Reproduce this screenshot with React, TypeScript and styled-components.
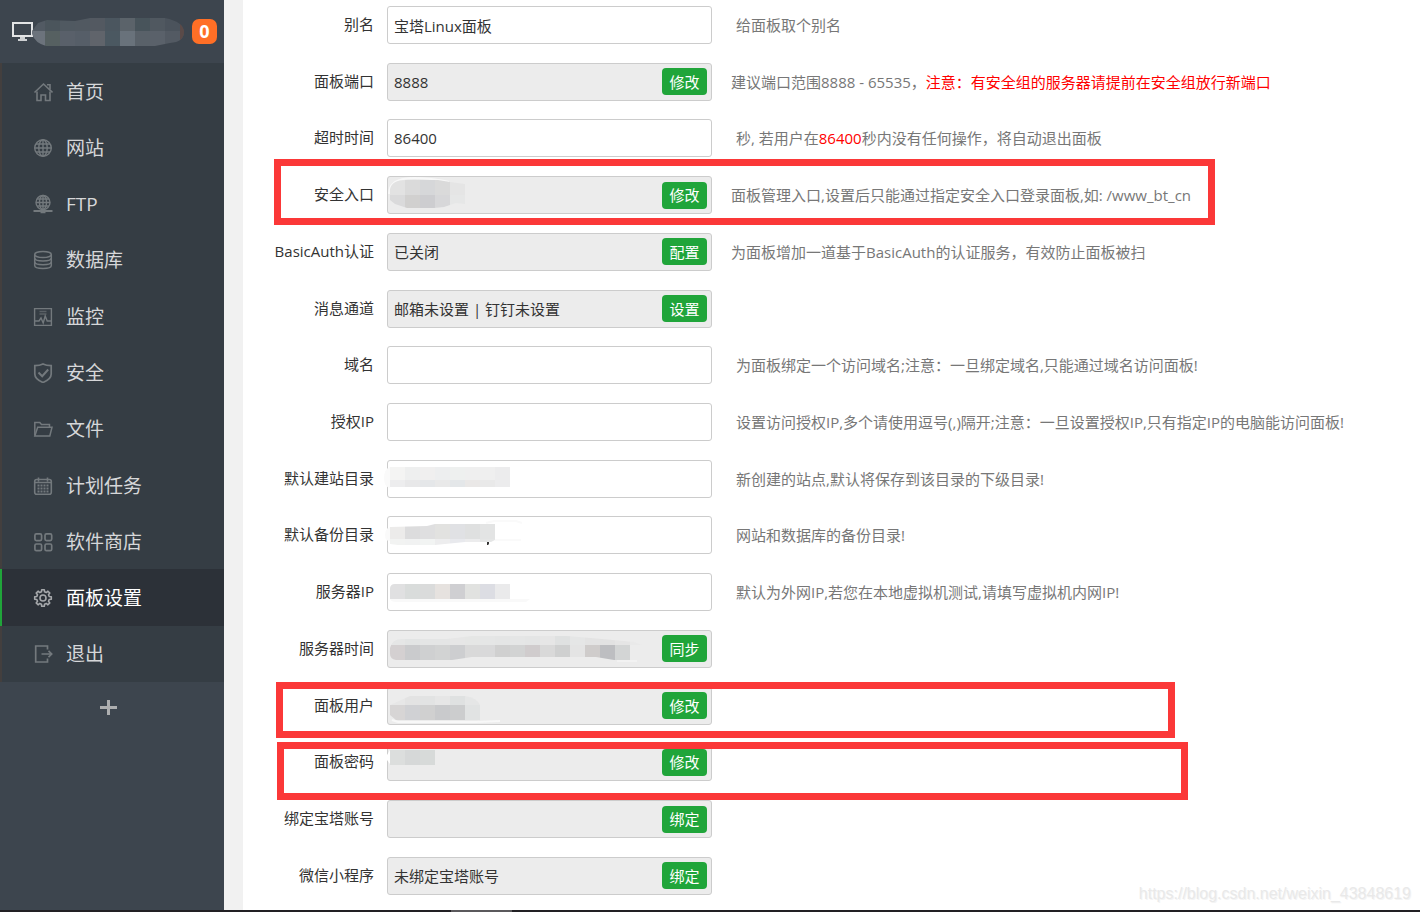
import React from "react";
import styled, { createGlobalStyle } from "styled-components";

const GlobalStyle = createGlobalStyle`
  * { box-sizing: border-box; }
  body {
    margin: 0;
    background: #fff;
    color: #333;
    font-family: "Open Sans", "Noto Sans CJK SC", sans-serif;
    font-size: 15px;
    line-height: 20px;
  }
  button, input { font: inherit; color: inherit; }
`;

const Page = styled.div`
  display: flex;
  flex-direction: column;
  min-height: 100vh;
`;

const Body = styled.div`
  display: flex;
  flex: 1;
`;

const Sidebar = styled.aside`
  flex: none;
  width: 224px;
  background: #3d454e;
`;

const HostBar = styled.header`
  display: flex;
  align-items: center;
  height: 63px;
  padding: 0 7px 0 11px;
`;

const HostName = styled.svg`
  flex: none;
  width: 152px;
  height: 28px;
  margin-left: -1px;
`;

const Badge = styled.span`
  margin-left: auto;
  width: 25px;
  height: 25px;
  border-radius: 7px;
  background: #ff6f26;
  color: #fff;
  font-size: 18px;
  font-weight: 700;
  line-height: 24px;
  text-align: center;
`;

const Menu = styled.nav`
  display: grid;
  grid-auto-rows: 1fr;
  min-height: 619px;
  background: #353d44;
`;

const MenuLink = styled.a<{ $active?: boolean }>`
  display: flex;
  align-items: center;
  gap: 13px;
  padding: 1px 0 0 31px;
  border-left: 2px solid ${(p) => (p.$active ? "#20a53a" : "#433f3e")};
  background: ${(p) => (p.$active ? "#2c3138" : "transparent")};
  color: ${(p) => (p.$active ? "#fff" : "#d6d7d9")};
  font-size: 19px;
  line-height: 24px;
  text-decoration: none;
  svg { color: ${(p) => (p.$active ? "#a6a8ab" : "#73797d")}; }
`;

const Glyph = styled.svg`
  flex: none;
  width: 20px;
  height: 20px;
  fill: none;
  stroke: currentColor;
`;

const AddButton = styled.button`
  display: flex;
  justify-content: center;
  align-items: center;
  width: 100%;
  height: 50px;
  padding: 0 7px 0 0;
  border: 0;
  background: none;
  color: #adaeaf;
`;

const Gutter = styled.div`
  flex: none;
  width: 19px;
  background: #f1f1f1;
`;

const Form = styled.form`
  flex: 1;
  min-width: 0;
  display: flex;
  flex-direction: column;
  justify-content: space-between;
  gap: 18px;
  padding: 6px 0 15px;
`;

const Row = styled.div`
  position: relative;
  display: flex;
  align-items: center;
`;

const Label = styled.label`
  flex: none;
  width: 131px;
  margin-right: 13px;
  padding-bottom: 2px;
  text-align: right;
`;

const Field = styled.div<{ $locked: boolean }>`
  position: relative;
  flex: none;
  display: flex;
  align-items: center;
  width: 325px;
  height: 38px;
  padding-right: 4px;
  border: 1px solid #ccc;
  border-radius: 3px;
  background: ${(p) => (p.$locked ? "#ececec" : "#fff")};
`;

const TextInput = styled.input`
  flex: 1;
  min-width: 0;
  height: 36px;
  padding: 0 6px;
  border: 0;
  outline: 0;
  background: none;
`;

const ActionButton = styled.button`
  flex: none;
  width: 45px;
  height: 27px;
  padding: 0;
  border: 0;
  border-radius: 4px;
  background: #20a53a;
  color: #fff;
`;

const Hint = styled.span<{ $locked: boolean }>`
  margin-left: ${(p) => (p.$locked ? 19 : 24)}px;
  color: #777;
`;

const Warn = styled.span`
  color: #f00;
`;

const Mosaic = styled.svg`
  position: absolute;
  left: -6px;
  top: -1px;
  width: 270px;
  height: 38px;
  pointer-events: none;
`;

const Highlight = styled.div<{ $box: [number, number, number, number] }>`
  position: absolute;
  left: ${(p) => p.$box[0]}px;
  top: ${(p) => p.$box[1]}px;
  width: ${(p) => p.$box[2]}px;
  height: ${(p) => p.$box[3]}px;
  border: 7px solid #fb3838;
  pointer-events: none;
`;

const Footer = styled.footer`
  display: flex;
  height: 2px;
  padding-left: 451px;
  background: #222024;
`;

const FooterThumb = styled.span`
  width: 61px;
  background: #5b595c;
`;

const Watermark = styled.span`
  position: absolute;
  right: 9px;
  bottom: 6px;
  color: #e9e9e9;
  font-family: "Liberation Sans", sans-serif;
  font-size: 16px;
  text-shadow: 1px 1px 0 #f4f4f4;
`;

const Main = styled.main`
  position: relative;
  flex: 1;
  min-width: 0;
  display: flex;
`;

/* A strip of equal cells, 15px wide, for masked values. */
const Cells = ({ x, y, h, colors }: { x: number; y: number; h: number; colors: string[] }) => (
  <>
    {colors.map((c, i) => (
      <rect key={i} x={x + i * 15} y={y} width={15} height={h} fill={c} />
    ))}
  </>
);

/* Outline of an eight-toothed gear centred at 10,10. */
const gearPath = (() => {
  const points: string[] = [];
  for (let tooth = 0; tooth < 8; tooth++) {
    const corners: [number, number][] = [[-14, 6.4], [-9, 8.4], [9, 8.4], [14, 6.4]];
    for (const [offset, r] of corners) {
      const a = ((tooth * 45 + offset) * Math.PI) / 180;
      points.push(`${(10 + r * Math.cos(a)).toFixed(2)} ${(10 + r * Math.sin(a)).toFixed(2)}`);
    }
  }
  return "M" + points.join("L") + "z";
})();

const icons: Record<string, React.ReactNode> = {
  home: (
    <g strokeWidth="1.6">
      <path d="M1.5 10.5 10.5 2l9 8.5" />
      <path d="M14 2.8h3v4.7" />
      <path d="M4 9.5v9h4V13h4.5v5.500H17v-9" />
    </g>
  ),
  globe: (
    <g strokeWidth="1.4">
      <circle cx="10" cy="10" r="8.3" />
      <ellipse cx="10" cy="10" rx="4.200" ry="8.3" />
      <path d="M10 1.700v16.600M1.700 10h16.600M3 6h14M3 14h14" />
    </g>
  ),
  ftp: (
    <g strokeWidth="1.400">
      <circle cx="10" cy="8.500" r="7" />
      <ellipse cx="10" cy="8.500" rx="3.500" ry="7" />
      <path d="M10 1.500v14M3 8.500h14M4.200 5h11.600M4.200 12h11.600" />
      <path d="M.5 17h19" strokeWidth="2" />
      <path d="M7.500 17.500h5" strokeWidth="3.500" />
    </g>
  ),
  database: (
    <g strokeWidth="1.500">
      <ellipse cx="10" cy="4.500" rx="8.3" ry="3" />
      <path d="M1.700 4.500v11c0 4 16.600 4 16.600 0v-11" />
      <path d="M1.700 8c0 4 16.600 4 16.600 0M1.700 11.700c0 4 16.600 4 16.600 0" />
    </g>
  ),
  monitor: (
    <g strokeWidth="1.400">
      <path d="M1.600 1.600h16.800v16.800H1.600z" />
      <path d="M2 14h4l2-3 2.200 5 2-7 2 5H18" />
      <path d="M6.500 4.500h7M6.500 7h7" opacity=".6" />
    </g>
  ),
  shield: (
    <g strokeWidth="1.700">
      <path d="M10 .9c2.500 1.300 5.500 1.700 8.200 1.700V11c0 4-4.500 7-8.200 8.500C6.300 18 1.800 15 1.800 11V2.600C4.500 2.600 7.500 2.200 10 .9z" />
      <path d="m5.500 9.500 3.700 3.700 6-6.700" strokeWidth="2" />
    </g>
  ),
  folder: (
    <g strokeWidth="1.500">
      <path d="M1.800 16.500v-13h5l1.700 2h8v2.700" />
      <path d="M1.800 17 4.700 8.200H19L16.800 17z" />
    </g>
  ),
  calendar: (
    <g strokeWidth="1.600">
      <rect x="1.700" y="3.500" width="16.600" height="14.800" rx="2" />
      <path d="M1.700 6.500h16.600M5.500 1.500v4M14.500 1.500v4" />
      <path d="M4.500 9.500h11M4.500 12.500h11M4.500 15.500h11" strokeWidth="1.800" strokeDasharray="2 1" />
    </g>
  ),
  apps: (
    <g strokeWidth="1.700">
      <rect x="1.900" y="1.900" width="6.700" height="6.700" rx="1.500" />
      <rect x="12" y="1.900" width="6.700" height="6.700" rx="1.500" />
      <rect x="1.900" y="12" width="6.700" height="6.700" rx="1.500" />
      <rect x="12" y="12" width="6.700" height="6.700" rx="1.500" />
    </g>
  ),
  gear: (
    <g strokeWidth="1.600" strokeLinejoin="round">
      <path d={gearPath} />
      <circle cx="10" cy="10" r="3" />
    </g>
  ),
  exit: (
    <g strokeWidth="1.700">
      <path d="M14.500 5.500V2H2.700v16h11.800v-3.500" />
      <path d="M8.500 10h10M15.500 6.800l3.200 3.200-3.200 3.200" />
    </g>
  ),
};

const menu: [string, string][] = [
  ["home", "首页"],
  ["globe", "网站"],
  ["ftp", "FTP"],
  ["database", "数据库"],
  ["monitor", "监控"],
  ["shield", "安全"],
  ["folder", "文件"],
  ["calendar", "计划任务"],
  ["apps", "软件商店"],
  ["gear", "面板设置"],
  ["exit", "退出"],
];

type Setting = {
  label: string;
  value?: string;
  action?: string;
  hint?: React.ReactNode;
  mask?: React.ReactNode;
  box?: [number, number, number, number];
};

const settings: Setting[] = [
  { label: "别名", value: "宝塔Linux面板", hint: "给面板取个别名" },
  {
    label: "面板端口",
    value: "8888",
    action: "修改",
    hint: (
      <>
        建议端口范围8888 - 65535，<Warn>注意：有安全组的服务器请提前在安全组放行新端口</Warn>
      </>
    ),
  },
  {
    label: "超时时间",
    value: "86400",
    hint: (
      <>
        秒, 若用户在<Warn>86400</Warn>秒内没有任何操作，将自动退出面板
      </>
    ),
  },
  {
    label: "安全入口",
    action: "修改",
    hint: "面板管理入口,设置后只能通过指定安全入口登录面板,如: /www_bt_cn",
    box: [31, -17, 941, 66],
    mask: (
      <>
        <path d="M7 18C7 7 16 2 32 2s26 2 35 4" stroke="#f8f8f8" strokeWidth="2" fill="none" />
        <clipPath id="entry">
          <path d="M8 13Q10 4 24 4H56L68 6l15 2v20l-9-1-12 4-10 1H25L13 28 8 24z" />
        </clipPath>
        <g clipPath="url(#entry)">
          <Cells x={8} y={4} h={15} colors={["#e2e2e2", "#dadada", "#d6d7d9", "#dadada", "#e5e5e5"]} />
          <Cells x={8} y={19} h={14} colors={["#dadadb", "#d1d0cf", "#cdcdd0", "#d7d7d9", "#e6e7e7"]} />
        </g>
      </>
    ),
  },
  {
    label: "BasicAuth认证",
    value: "已关闭",
    action: "配置",
    hint: "为面板增加一道基于BasicAuth的认证服务，有效防止面板被扫",
  },
  { label: "消息通道", value: "邮箱未设置 | 钉钉未设置", action: "设置" },
  { label: "域名", hint: "为面板绑定一个访问域名;注意：一旦绑定域名,只能通过域名访问面板!" },
  {
    label: "授权IP",
    hint: "设置访问授权IP,多个请使用逗号(,)隔开;注意：一旦设置授权IP,只有指定IP的电脑能访问面板!",
  },
  {
    label: "默认建站目录",
    hint: "新创建的站点,默认将保存到该目录的下级目录!",
    mask: (
      <>
        <path d="M8 7Q2 9 2 18t6 10z" fill="#fafafa" />
        <Cells x={8} y={7} h={13} colors={["#f4f4f3", "#eeefef", "#f0efef", "#edeeef", "#eef0ef", "#efefef", "#efefef", "#ececed"]} />
        <Cells x={8} y={20} h={7} colors={["#ededee", "#e8e8e9", "#e5e7e9", "#e9e9e9", "#e4e7e9", "#eae8e7", "#e9e9e9", "#ececed"]} />
      </>
    ),
  },
  {
    label: "默认备份目录",
    hint: "网站和数据库的备份目录!",
    mask: (
      <>
        <path d="M8 11Q3 13 3 19t5 6z" fill="#fafafa" />
        <path d="M104 7l8-2h22l6 2M113 24h26" stroke="#fafafa" strokeWidth="2" fill="none" />
        <clipPath id="backup">
          <path d="M8 11 45 10l8-2h60v16l-4 2H83l-30 3H16l-8-1z" />
        </clipPath>
        <g clipPath="url(#backup)">
          <Cells x={8} y={8} h={16} colors={["#ecebea", "#dcdcdd", "#dfdfe0", "#e2e2e0", "#e0e1e4", "#dfe0e0", "#e3e4e4"]} />
          <Cells x={8} y={23} h={6} colors={["#f2f3f2", "#f1f2f2", "#f2f4f3", "#ededee", "#e8e9ed", "#ececed", "#e5e6e6"]} />
        </g>
        <path d="M105 26h2v2l-1 1h-1z" fill="#333" />
      </>
    ),
  },
  {
    label: "服务器IP",
    hint: "默认为外网IP,若您在本地虚拟机测试,请填写虚拟机内网IP!",
    mask: (
      <>
        <path d="M8 26h140l-4 3H14q-5 0-6-3zM115 10h28" fill="#f9f9f9" />
        <clipPath id="ip">
          <path d="M8 16q0-5 5-5h115v15H8z" />
        </clipPath>
        <g clipPath="url(#ip)">
          <Cells x={8} y={11} h={15} colors={["#e0e0e1", "#d9dcdb", "#dadbdb", "#e6e2df", "#cfcfd2", "#e1e2e0", "#dcdde3", "#eaeaeb"]} />
        </g>
      </>
    ),
  },
  {
    label: "服务器时间",
    action: "同步",
    mask: (
      <>
        <clipPath id="time">
          <path d="M8 18Q10 9 20 9h45l25-3h95l35 3 32 3 8 3-12 1v14h-16l-18-3H90l-20 3H14q-6-1-6-6z" />
        </clipPath>
        <g clipPath="url(#time)">
          <Cells x={8} y={6} h={9} colors={["#e5e6e6", "#e2e4e4", "#e4e5e5", "#e4e5e5", "#e6e6e6", "#e5e6e5", "#e5e6e6", "#e4e5e5", "#e5e6e6", "#e4e5e5", "#e6e6e6", "#dfe1e1", "#e5e6e6", "#e3e3e3", "#e2e2e2", "#e5e5e5", "#e9e9e9"]} />
          <Cells x={8} y={15} h={16} colors={["#d4d0d1", "#cacbcd", "#cfd0d1", "#d2d3d3", "#cdced0", "#d9d9d9", "#d9d9da", "#d0d0d0", "#d2d3d3", "#d0cccd", "#d9d9d9", "#cfd0d0", "#e4e4e4", "#cfcccb", "#bdbec1", "#d3d5d5"]} />
        </g>
        <path d="M235 31h20" stroke="#f8f8f8" />
      </>
    ),
  },
  {
    label: "面板用户",
    action: "修改",
    box: [33, -5, 899, 56],
    mask: (
      <>
        <clipPath id="user">
          <path d="M8 18 28 9h55q12 2 15 9v15H14l-6-5z" />
        </clipPath>
        <g clipPath="url(#user)">
          <Cells x={8} y={9} h={9} colors={["#e7e7e7", "#e3e3e3", "#e2e3e3", "#e6e6e6", "#dfe1e1", "#e5e6e6"]} />
          <Cells x={8} y={18} h={15} colors={["#d7d5d5", "#d0d1d4", "#d0d0d0", "#c9cacc", "#cccdce", "#e1e3e3"]} />
        </g>
        <path d="M10 33l6 2h78l24-1" stroke="#f8f8f8" strokeWidth="2" fill="none" />
      </>
    ),
  },
  {
    label: "面板密码",
    action: "修改",
    box: [34, -1, 911, 58],
    mask: (
      <>
        <path d="M8 7 5 12v5l3 4z" fill="#fff" />
        <Cells x={8} y={7} h={15} colors={["#dcdedd", "#d6d8d8", "#d7dad9"]} />
      </>
    ),
  },
  { label: "绑定宝塔账号", action: "绑定" },
  { label: "微信小程序", value: "未绑定宝塔账号", action: "绑定" },
];

export default function App() {
  return (
    <Page>
      <GlobalStyle />
      <Body>
        <Sidebar>
          <HostBar>
            <svg width="22" height="22" viewBox="0 0 22 22" fill="none">
              <path d="M2 2h19v13H2z" stroke="#e3e4e5" strokeWidth="2" />
              <path d="M9 16h5v2h2v2H7v-2h2z" fill="#cfd1d3" />
            </svg>
            <HostName viewBox="0 0 152 28">
              <clipPath id="host">
                <path d="M0 13 6 5l9-3 28 1 15-3h75q19 4 19 14t-14 11l-15 3H14Q3 25 0 16z" />
              </clipPath>
              <g clipPath="url(#host)">
                <Cells x={-2} y={0} h={13} colors={["#525a63", "#4b555c", "#505961", "#515961", "#535961", "#4b565f", "#5b636a", "#48545b", "#505860", "#4b535c", "#454e57"]} />
                <Cells x={-2} y={13} h={15} colors={["#6c737c", "#566061", "#59606a", "#565e68", "#60646b", "#4b5861", "#69727b", "#596169", "#5a616a", "#535a63", "#4d535b"]} />
                <rect x="148" y="5" width="4" height="17" fill="#5a4a48" />
              </g>
            </HostName>
            <Badge>0</Badge>
          </HostBar>
          <Menu>
            {menu.map(([icon, text]) => (
              <MenuLink key={icon} href={"#" + icon} $active={icon === "gear"}>
                <Glyph viewBox="0 0 20 20">{icons[icon]}</Glyph>
                {text}
              </MenuLink>
            ))}
          </Menu>
          <AddButton type="button" aria-label="添加">
            <svg width="17" height="17" viewBox="0 0 17 17">
              <path d="M8.500 1v15M0 8.500h17" stroke="currentColor" strokeWidth="3" />
            </svg>
          </AddButton>
        </Sidebar>
        <Gutter />
        <Main>
          <Form>
            {settings.map((s, i) => (
              <Row key={s.label}>
                <Label htmlFor={"setting-" + i}>{s.label}</Label>
                <Field $locked={!!s.action}>
                  <TextInput id={"setting-" + i} type="text" defaultValue={s.value} readOnly={!!s.action} />
                  {s.action && <ActionButton type="button">{s.action}</ActionButton>}
                  {s.mask && <Mosaic viewBox="0 0 270 38">{s.mask}</Mosaic>}
                </Field>
                {s.hint && <Hint $locked={!!s.action}>{s.hint}</Hint>}
                {s.box && <Highlight $box={s.box} />}
              </Row>
            ))}
          </Form>
          <Watermark>https://blog.csdn.net/weixin_43848619</Watermark>
        </Main>
      </Body>
      <Footer>
        <FooterThumb />
      </Footer>
    </Page>
  );
}
